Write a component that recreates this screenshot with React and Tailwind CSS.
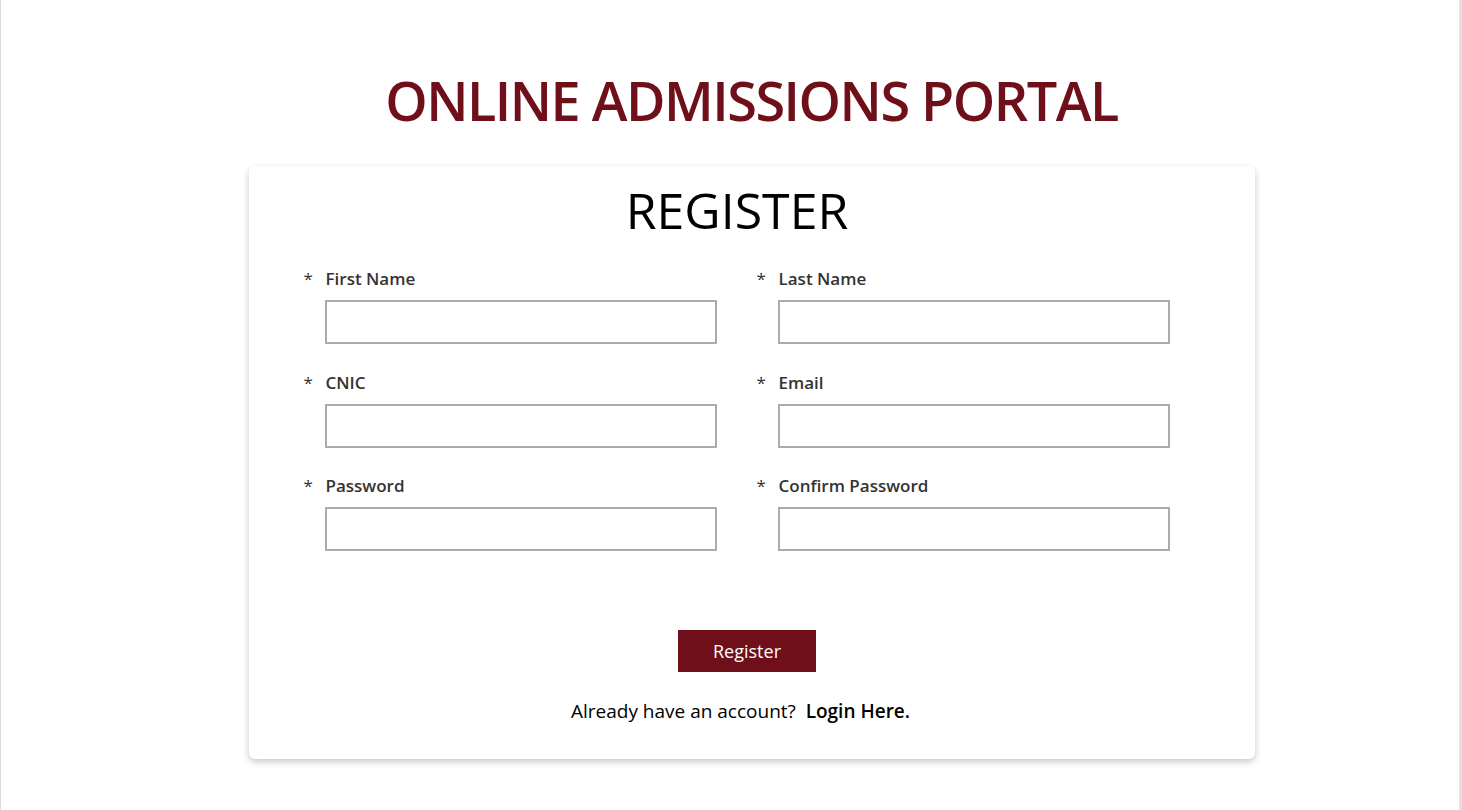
import React from "react";

const fields = [
  ["First Name", "Last Name"],
  ["CNIC", "Email"],
  ["Password", "Confirm Password"],
];

function Field({ label, type = "text" }) {
  return (
    <div className="flex flex-col">
      <div className="flex items-start text-[17px] leading-none text-[#333]">
        <span className="-ml-[1px] w-[22px] font-normal">*</span>
        <span className="font-semibold">{label}</span>
      </div>
      <input
        type={type}
        className="ml-[20px] mt-[13px] h-[44px] w-[392px] border-2 border-[#ababab] bg-white outline-none"
      />
    </div>
  );
}

export default function App() {
  return (
    <div
      className="min-h-[810px] w-full border-l border-r-[3px] border-l-[#dcdcdc] border-r-[#e0e0e0] bg-white"
      style={{ fontFamily: '"Open Sans", "Noto Sans", sans-serif' }}
    >
      <div className="flex flex-col items-center pl-[43px] pt-[73px]">
        <h1 className="text-[54px] font-semibold leading-none tracking-[-1.5px] text-[#6f0f1a]">
          ONLINE ADMISSIONS PORTAL
        </h1>
        <div className="mt-[39px] flex w-[1006px] flex-col rounded-md bg-white pb-[38px] pl-[56px] pr-[85px] pt-[19px] shadow-[0_3px_7px_rgba(0,0,0,0.22)]">
          <h2 className="text-center text-[50px] font-normal leading-none text-black">
            REGISTER
          </h2>
          <div className="mt-[35px] grid grid-cols-2 gap-x-[41px] gap-y-[29.5px]">
            {fields.flat().map((f) => (
              <Field
                key={f}
                label={f}
                type={f.includes("Password") ? "password" : "text"}
              />
            ))}
          </div>
          <div className="mt-[79px] flex justify-center pl-[20px]">
            <button className="h-[42px] w-[138px] bg-[#6f0f1a] text-[18px] text-white">
              Register
            </button>
          </div>
          <p className="mt-[30px] pl-[7px] text-center text-[19px] leading-none text-black">
            Already have an account?&nbsp;{" "}
            <a className="font-semibold">Login Here.</a>
          </p>
        </div>
      </div>
    </div>
  );
}
